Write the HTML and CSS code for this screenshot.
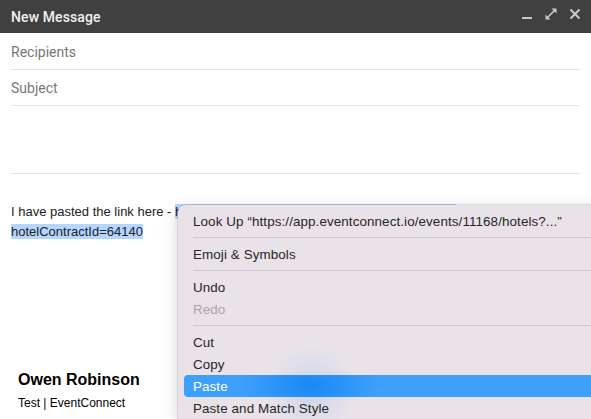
FILE: index.html
```html
<!DOCTYPE html>
<html>
<head>
<meta charset="utf-8">
<link rel="stylesheet" href="styles.css">
</head>
<body>
<div class="compose">
  <div class="header">
    <div class="title">New Message</div>
    <div class="controls">
      <svg class="ic" viewBox="0 0 14 14" width="14" height="14"><rect x="2" y="10" width="10" height="2" fill="#c9c9c9"/></svg>
      <svg class="ic" viewBox="0 0 14 14" width="14" height="14"><polygon points="12.5,1.5 7.5,1.5 12.5,6.5" fill="#c9c9c9"/><line x1="10.5" y1="3.5" x2="3.5" y2="10.5" stroke="#c9c9c9" stroke-width="1.6"/><polygon points="1.5,12.5 1.5,7.5 6.5,12.5" fill="#c9c9c9"/></svg>
      <svg class="ic" viewBox="0 0 14 14" width="14" height="14"><path d="M2.5 2.5 L11.5 11.5 M11.5 2.5 L2.5 11.5" stroke="#c9c9c9" stroke-width="2"/></svg>
    </div>
  </div>
  <div class="fields">
    <div class="field">Recipients</div>
    <div class="field">Subject</div>
    <div class="spacer"></div>
  </div>
  <div class="body">
    <div class="msg">I have pasted the link here - <span class="sel">https://app.eventconnect.io/events/11168/hotels?</span><br><span class="sel">hotelContractId=64140</span></div>
    <div class="sig">
      <div class="name">Owen Robinson</div>
      <div class="role">Test | EventConnect</div>
    </div>
  </div>
</div>
<div class="menu">
  <div class="item">Look Up “https://app.eventconnect.io/events/11168/hotels?...”</div>
  <div class="sep"></div>
  <div class="item">Emoji &amp; Symbols</div>
  <div class="sep"></div>
  <div class="item">Undo</div>
  <div class="item disabled">Redo</div>
  <div class="sep"></div>
  <div class="item">Cut</div>
  <div class="item">Copy</div>
  <div class="item active">Paste</div>
  <div class="item">Paste and Match Style</div>
</div>
</body>
</html>
```
FILE: styles.css
```css
html, body {
  margin: 0;
  padding: 0;
}
body {
  width: 591px;
  height: 419px;
  overflow: hidden;
  position: relative;
  background: #fff;
  font-family: "Liberation Sans", Arial, sans-serif;
}
.compose {
  display: flex;
  flex-direction: column;
}
.header {
  height: 33px;
  background: #404040;
  display: flex;
  justify-content: space-between;
  align-items: center;
  padding: 0 9px 0 11px;
}
.title {
  font-family: Roboto, sans-serif;
  font-size: 14px;
  font-weight: 500;
  color: #f1f1f1;
  letter-spacing: 0.1px;
}
.controls {
  display: flex;
  gap: 10px;
  align-self: flex-start;
  margin-top: 7px;
}
.ic {
  display: block;
}
.fields {
  padding: 1px 11px 0 11px;
}
.field {
  height: 36px;
  box-sizing: border-box;
  border-bottom: 1px solid #e6e6e6;
  display: flex;
  align-items: center;
  font-family: Roboto, sans-serif;
  font-size: 14px;
  color: #777;
  padding-top: 1px;
}
.spacer {
  height: 68px;
  box-sizing: border-box;
  border-bottom: 1px solid #e6e6e6;
}
.body {
  padding: 28px 11px 0 11px;
}
.msg {
  font-size: 13px;
  line-height: 20px;
  color: #222;
  white-space: nowrap;
}
.sel {
  background: #b4d5fe;
}
.sig {
  margin-top: 128px;
  padding-left: 7px;
  color: #000;
}
.name {
  font-size: 16px;
  font-weight: bold;
  line-height: 20px;
}
.role {
  font-size: 12px;
  line-height: 20px;
  margin-top: 3px;
}
.menu {
  position: absolute;
  left: 178px;
  top: 205px;
  width: 440px;
  height: 214px;
  overflow: hidden;
  box-sizing: border-box;
  padding: 5px 0;
  border-radius: 7px 0 0 0;
  background:
    radial-gradient(circle at 134px 185px, rgba(170, 195, 240, 0.45) 0, rgba(170, 195, 240, 0) 45px),
    #e9e3e9;
  box-shadow: 0 0 0 0.5px rgba(0, 0, 0, 0.18), 0 4px 16px rgba(0, 0, 0, 0.18);
  font-family: "Liberation Sans", Arial, sans-serif;
  font-size: 13.4px;
  letter-spacing: 0.1px;
  color: #262626;
}
.item {
  height: 22px;
  box-sizing: border-box;
  padding-top: 1px;
  line-height: 21px;
  padding-left: 15px;
  white-space: nowrap;
}
.item.disabled {
  color: #a9a5a9;
}
.item.active {
  margin-left: 6px;
  padding-left: 9px;
  border-radius: 4px;
  color: #fff;
  background: radial-gradient(ellipse 70px 40px at 126px 10px, #1a88f4 0, #3fa0fb 100%);
}
.sep {
  height: 1px;
  margin: 5px 0 5px 15px;
  background: #cfc9cf;
}
```
